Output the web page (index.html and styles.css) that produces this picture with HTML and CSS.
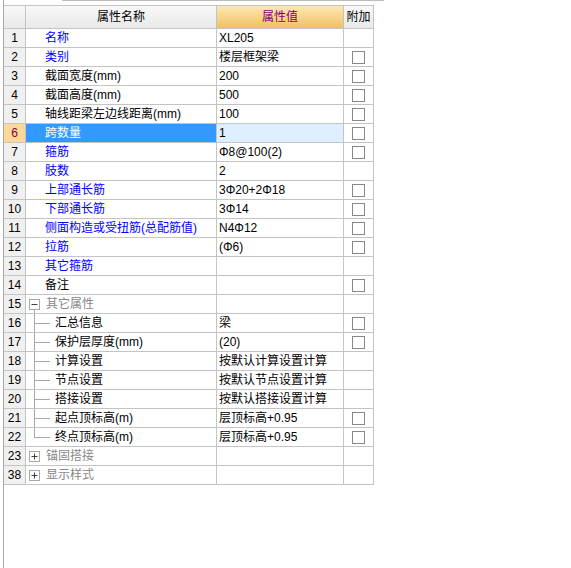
FILE: index.html
```html
<!DOCTYPE html>
<html lang="zh-CN">
<head>
<meta charset="utf-8">
<title>属性编辑</title>
<link rel="stylesheet" href="styles.css">
</head>
<body>
<div class="panel">
  <div class="topline"></div>
  <div class="grid">
    <div class="row head">
      <div class="c num"></div>
      <div class="c name hc">属性名称</div>
      <div class="c val hc hv">属性值</div>
      <div class="c ext hc">附加</div>
    </div>

    <div class="row"><div class="c num">1</div><div class="c name link">名称</div><div class="c val">XL205</div><div class="c ext"></div></div>
    <div class="row"><div class="c num">2</div><div class="c name link">类别</div><div class="c val">楼层框架梁</div><div class="c ext"><span class="cb"></span></div></div>
    <div class="row"><div class="c num">3</div><div class="c name">截面宽度(mm)</div><div class="c val">200</div><div class="c ext"><span class="cb"></span></div></div>
    <div class="row"><div class="c num">4</div><div class="c name">截面高度(mm)</div><div class="c val">500</div><div class="c ext"><span class="cb"></span></div></div>
    <div class="row"><div class="c num">5</div><div class="c name">轴线距梁左边线距离(mm)</div><div class="c val">100</div><div class="c ext"><span class="cb"></span></div></div>
    <div class="row sel"><div class="c num">6</div><div class="c name">跨数量</div><div class="c val">1</div><div class="c ext"><span class="cb"></span></div></div>
    <div class="row"><div class="c num">7</div><div class="c name link">箍筋</div><div class="c val">Φ8@100(2)</div><div class="c ext"><span class="cb"></span></div></div>
    <div class="row"><div class="c num">8</div><div class="c name link">肢数</div><div class="c val">2</div><div class="c ext"></div></div>
    <div class="row"><div class="c num">9</div><div class="c name link">上部通长筋</div><div class="c val">3Φ20+2Φ18</div><div class="c ext"><span class="cb"></span></div></div>
    <div class="row"><div class="c num">10</div><div class="c name link">下部通长筋</div><div class="c val">3Φ14</div><div class="c ext"><span class="cb"></span></div></div>
    <div class="row"><div class="c num">11</div><div class="c name link">侧面构造或受扭筋(总配筋值)</div><div class="c val">N4Φ12</div><div class="c ext"><span class="cb"></span></div></div>
    <div class="row"><div class="c num">12</div><div class="c name link">拉筋</div><div class="c val">(Φ6)</div><div class="c ext"><span class="cb"></span></div></div>
    <div class="row"><div class="c num">13</div><div class="c name link">其它箍筋</div><div class="c val"></div><div class="c ext"></div></div>
    <div class="row"><div class="c num">14</div><div class="c name">备注</div><div class="c val"></div><div class="c ext"><span class="cb"></span></div></div>

    <div class="row"><div class="c num">15</div><div class="c name grp open"><svg class="box" width="11" height="11" viewBox="0 0 11 11"><rect x="0.5" y="0.5" width="10" height="10" fill="#fff" stroke="#a8a8a8"/><line x1="2.5" y1="5.5" x2="8.5" y2="5.5" stroke="#404040"/></svg><span class="gtext">其它属性</span></div><div class="c val"></div><div class="c ext"></div></div>
    <div class="row"><div class="c num">16</div><div class="c name tree"><span class="branch"></span><span class="ttext">汇总信息</span></div><div class="c val">梁</div><div class="c ext"><span class="cb"></span></div></div>
    <div class="row"><div class="c num">17</div><div class="c name tree"><span class="branch"></span><span class="ttext">保护层厚度(mm)</span></div><div class="c val">(20)</div><div class="c ext"><span class="cb"></span></div></div>
    <div class="row"><div class="c num">18</div><div class="c name tree"><span class="branch"></span><span class="ttext">计算设置</span></div><div class="c val">按默认计算设置计算</div><div class="c ext"></div></div>
    <div class="row"><div class="c num">19</div><div class="c name tree"><span class="branch"></span><span class="ttext">节点设置</span></div><div class="c val">按默认节点设置计算</div><div class="c ext"></div></div>
    <div class="row"><div class="c num">20</div><div class="c name tree"><span class="branch"></span><span class="ttext">搭接设置</span></div><div class="c val">按默认搭接设置计算</div><div class="c ext"></div></div>
    <div class="row"><div class="c num">21</div><div class="c name tree"><span class="branch"></span><span class="ttext">起点顶标高(m)</span></div><div class="c val">层顶标高+0.95</div><div class="c ext"><span class="cb"></span></div></div>
    <div class="row"><div class="c num">22</div><div class="c name tree"><span class="branch last"></span><span class="ttext">终点顶标高(m)</span></div><div class="c val">层顶标高+0.95</div><div class="c ext"><span class="cb"></span></div></div>

    <div class="row"><div class="c num">23</div><div class="c name grp"><svg class="box" width="11" height="11" viewBox="0 0 11 11"><rect x="0.5" y="0.5" width="10" height="10" fill="#fff" stroke="#a8a8a8"/><line x1="2.5" y1="5.5" x2="8.5" y2="5.5" stroke="#404040"/><line x1="5.5" y1="2.5" x2="5.5" y2="8.5" stroke="#404040"/></svg><span class="gtext">锚固搭接</span></div><div class="c val"></div><div class="c ext"></div></div>
    <div class="row"><div class="c num">38</div><div class="c name grp"><svg class="box" width="11" height="11" viewBox="0 0 11 11"><rect x="0.5" y="0.5" width="10" height="10" fill="#fff" stroke="#a8a8a8"/><line x1="2.5" y1="5.5" x2="8.5" y2="5.5" stroke="#404040"/><line x1="5.5" y1="2.5" x2="5.5" y2="8.5" stroke="#404040"/></svg><span class="gtext">显示样式</span></div><div class="c val"></div><div class="c ext"></div></div>
  </div>
</div>
</body>
</html>
```

FILE: styles.css
```css
* { box-sizing: border-box; }

html, body {
  margin: 0;
  padding: 0;
  background: #ffffff;
}

body {
  font-family: "Liberation Sans", "Noto Sans CJK SC", sans-serif;
  font-size: 12px;
  color: #000;
}

.panel {
  margin-left: 3px;
  height: 568px;
  border-left: 1px solid #a8a8a8;
}

.topline {
  margin-left: 58px;
  width: 322px;
  height: 1px;
  background: #bdbdbd;
}

.grid {
  margin-top: 4px;
  width: 370px;
  border-top: 1px solid #c4c4c4;
}

.row {
  display: grid;
  grid-template-columns: 22px 191px 127px 30px;
  height: 19px;
}

.row.head {
  height: 23px;
}

.c {
  display: flex;
  align-items: center;
  border-right: 1px solid #c4c4c4;
  border-bottom: 1px solid #c4c4c4;
  white-space: nowrap;
  overflow: hidden;
  line-height: 18px;
}

.num {
  justify-content: center;
  background: #f0f0f0;
  font-size: 12px;
}

.name {
  padding-left: 19px;
}

.val {
  padding-left: 2px;
}

.ext {
  justify-content: center;
}

.head .c {
  background: linear-gradient(#f8f8f8, #e9e9e9);
  justify-content: center;
  padding-left: 0;
  font-size: 12px;
}

.head .hv {
  background: linear-gradient(#fde8b4, #f3c062);
  color: #800080;
}

.link {
  color: #0000ff;
}

.sel .num {
  background: #fcd89b;
  color: #800040;
}

.sel .name {
  background: #3399ff;
  color: #ffffff;
}

.sel .val {
  background: #ddeeff;
}

.cb {
  display: block;
  width: 13px;
  height: 13px;
  border: 1px solid #888888;
  background: #ffffff;
}

.grp {
  padding-left: 3px;
  color: #888888;
}

.grp .box {
  display: block;
  flex: none;
}

.grp .gtext {
  margin-left: 6px;
}

.grp.open {
  background: linear-gradient(#a8a8a8, #a8a8a8) no-repeat 8px 15px / 1px 3px;
}

.tree {
  padding-left: 8px;
  align-items: stretch;
}

.branch {
  flex: none;
  width: 16px;
  background:
    linear-gradient(#a8a8a8, #a8a8a8) no-repeat 0 0 / 1px 100%,
    linear-gradient(#a8a8a8, #a8a8a8) no-repeat 0 9px / 100% 1px;
}

.branch.last {
  background:
    linear-gradient(#a8a8a8, #a8a8a8) no-repeat 0 0 / 1px 10px,
    linear-gradient(#a8a8a8, #a8a8a8) no-repeat 0 9px / 100% 1px;
}

.ttext {
  margin-left: 5px;
  align-self: center;
}
```
